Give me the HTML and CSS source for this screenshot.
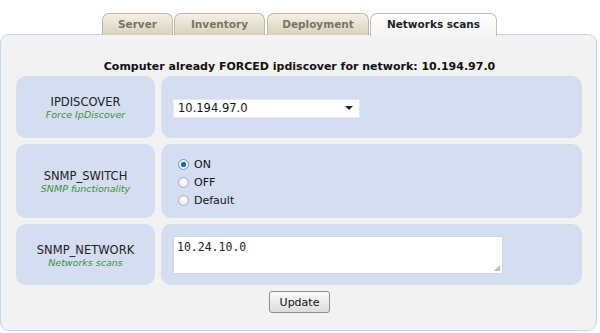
FILE: index.html
```html
<!DOCTYPE html>
<html>
<head>
<meta charset="utf-8">
<link rel="stylesheet" href="styles.css">
</head>
<body>
<div class="tabs">
  <div class="tab">Server</div>
  <div class="tab">Inventory</div>
  <div class="tab">Deployment</div>
  <div class="tab active">Networks scans</div>
</div>
<div class="panel">
  <div class="title">Computer already FORCED ipdiscover for network: 10.194.97.0</div>
  <div class="grid">
    <div class="label r1"><div class="name">IPDISCOVER</div><div class="sub">Force IpDiscover</div></div>
    <div class="value r1">
      <div class="select"><span>10.194.97.0</span><span class="arrow"></span></div>
    </div>
    <div class="label r2"><div class="name">SNMP_SWITCH</div><div class="sub">SNMP functionality</div></div>
    <div class="value r2 radios">
      <label class="radio"><span class="dot on"></span>ON</label>
      <label class="radio"><span class="dot"></span>OFF</label>
      <label class="radio"><span class="dot"></span>Default</label>
    </div>
    <div class="label r3"><div class="name">SNMP_NETWORK</div><div class="sub">Networks scans</div></div>
    <div class="value r3 top">
      <div class="textarea">10.24.10.0<span class="grip"></span></div>
    </div>
  </div>
  <div class="actions"><button class="btn">Update</button></div>
</div>
</body>
</html>
```
FILE: styles.css
```css
html, body { margin: 0; padding: 0; background: #ffffff; }
body { font-family: "DejaVu Sans", Verdana, sans-serif; color: #222; width: 600px; height: 333px; overflow: hidden; }
.tabs { display: flex; padding: 13px 0 0 102px; height: 21px; position: relative; z-index: 2; }
.tab {
  box-sizing: border-box; height: 22px; padding-top: 4px; font-size: 10.5px; font-weight: bold; text-align: center;
  white-space: nowrap; color: #7a7563; background: linear-gradient(#f3f0e6, #d8d2bb); border: 1px solid #bdb8a6; border-bottom: none;
  border-radius: 7px 7px 0 0;
}
.tab:nth-child(1) { width: 71px; }
.tab:nth-child(2) { width: 91px; margin-left: 1px; }
.tab:nth-child(3) { width: 102px; margin-left: 2px; }
.tab.active { width: 127px; margin-left: 1px; color: #222; background: linear-gradient(#ffffff, #f4f4f2); border-color: #c2c0b8; height: 23px; }
.panel {
  box-sizing: border-box; width: 597px; height: 297px; background: #f2f2f2; border: 1px solid #c6d4ea;
  border-radius: 9px; padding: 25px 15px 0 15px;
}
.title { text-align: center; font-size: 11px; line-height: 14px; font-weight: bold; color: #111; height: 16px; padding-left: 2px; }
.grid { display: grid; grid-template-columns: 139px 421px; grid-template-rows: 62px 74px 61px; gap: 6px; }
.label, .value { background: #d5ddf1; border-radius: 10px; }
.label { display: flex; flex-direction: column; align-items: center; justify-content: center; padding-top: 3px; box-sizing: border-box; }
.name { font-size: 11.5px; color: #222; line-height: 13px; }
.sub { font-size: 9.5px; font-style: italic; color: #3a933a; line-height: 12px; }
.value { display: flex; align-items: center; padding-left: 12px; }
.select {
  box-sizing: border-box; width: 187px; height: 19px; background: #fff; border: 1px solid #e6e9f2; display: flex;
  align-items: center; justify-content: space-between; padding: 0 6px 0 4px; font-size: 11.5px; color: #111; margin-top: 2px;
}
.arrow { width: 0; height: 0; border-left: 4px solid transparent; border-right: 4px solid transparent; border-top: 4px solid #222; }
.radios { flex-direction: column; align-items: flex-start; justify-content: center; padding-left: 17px; padding-top: 3px; gap: 4px; }
.radio { display: flex; align-items: center; font-size: 11px; color: #111; height: 14px; }
.dot {
  box-sizing: border-box; width: 11px; height: 11px; border-radius: 50%; border: 1px solid #a9b0b8;
  background: radial-gradient(circle at 50% 40%, #ffffff, #dfe3e8); margin-right: 5px;
}
.dot.on { background: radial-gradient(circle, #1f6fa8 0 2.5px, #eaf2f8 3px); border-color: #7c97ae; }
.top { align-items: flex-start; padding-top: 12px; }
.textarea {
  position: relative; box-sizing: border-box; width: 330px; height: 38px; background: #fff; border: 1px solid #d0d5e0;
  font-family: "DejaVu Sans Mono", "Liberation Mono", monospace; font-size: 11.5px; color: #222; padding: 3px 0 0 3px;
}
.grip { position: absolute; right: 2px; bottom: 2px; width: 6px; height: 6px;
  background: radial-gradient(circle, #b8bcc4 0.8px, transparent 1px) 0 0 / 2px 2px; clip-path: polygon(100% 0, 100% 100%, 0 100%); }
.actions { display: flex; justify-content: center; padding-top: 6px; padding-left: 2px; }
.btn {
  box-sizing: border-box; width: 61px; height: 22px; font-family: "DejaVu Sans", sans-serif; font-size: 11px; color: #111;
  background: linear-gradient(#fafafa, #dcdcdc); border: 1px solid #8e8e8e; border-radius: 3px; padding: 0;
}
```
